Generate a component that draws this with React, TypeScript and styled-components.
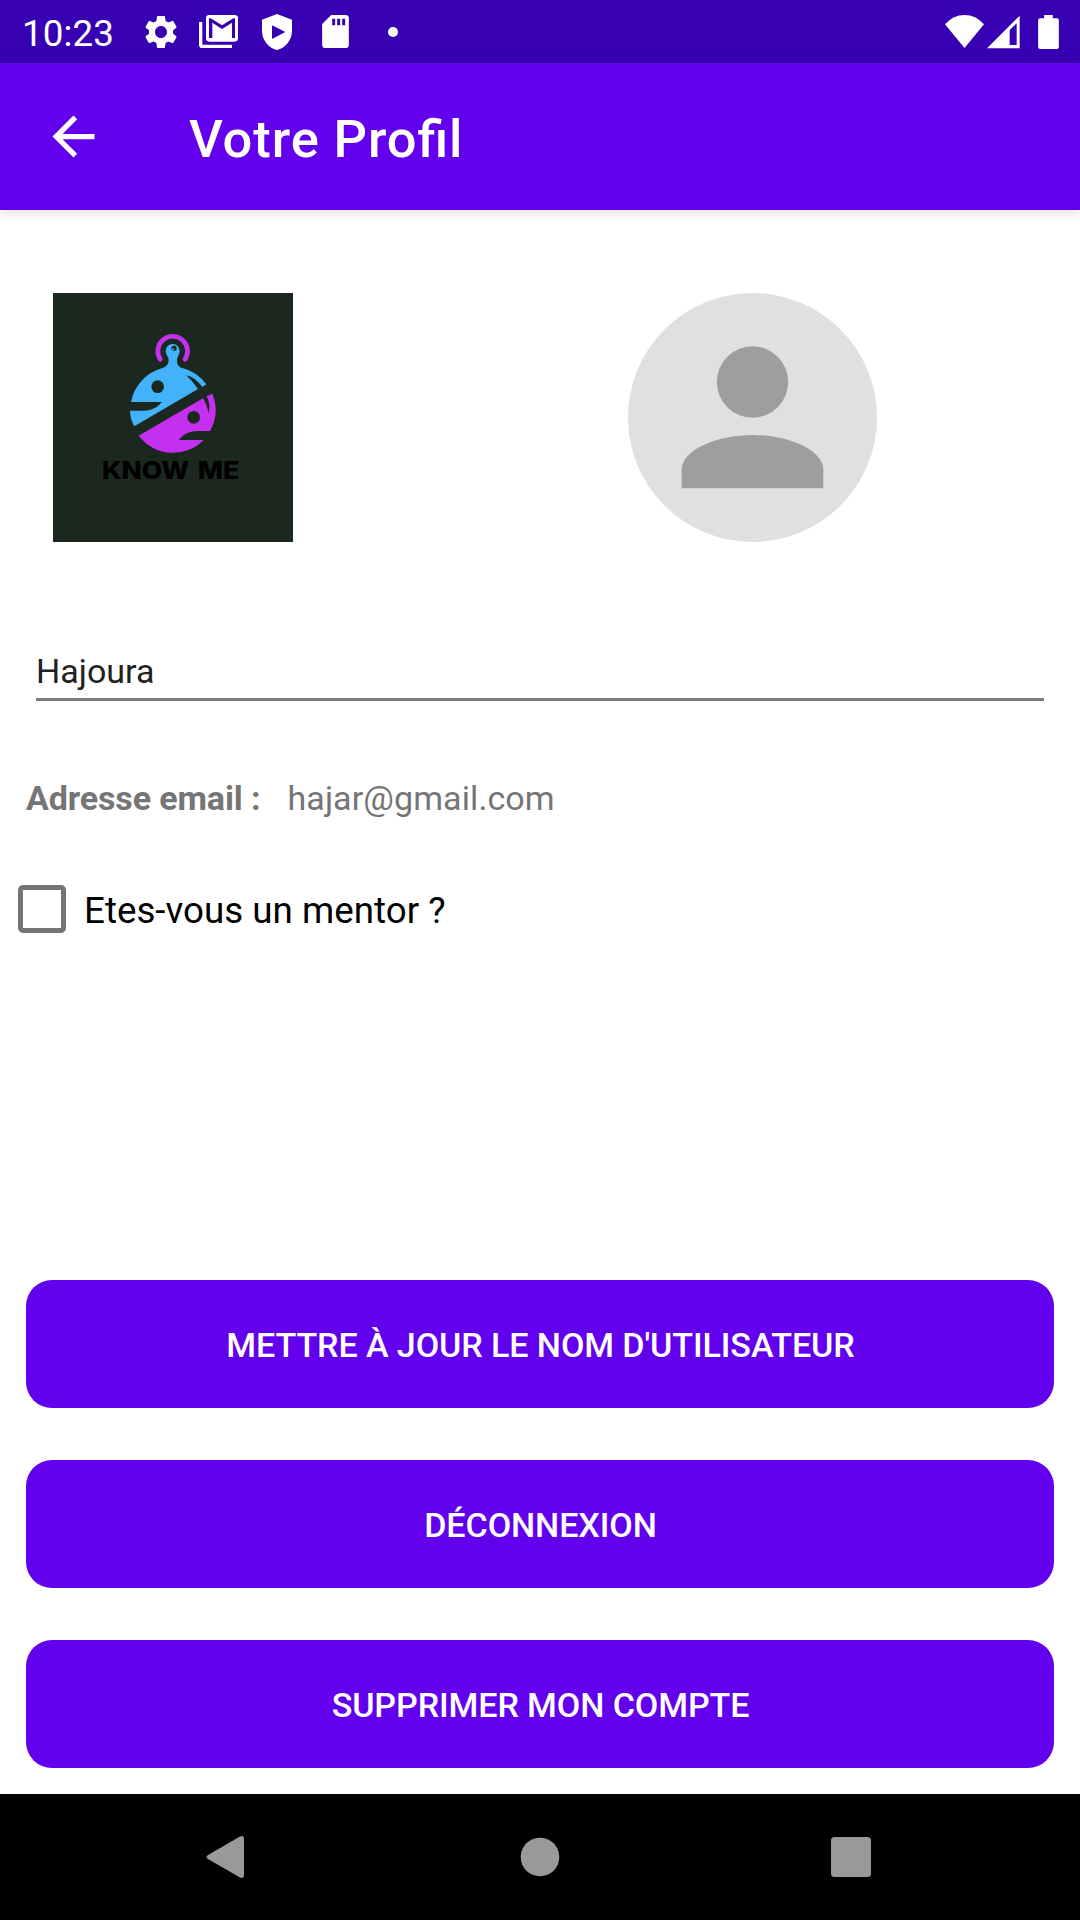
import React, { useState } from "react";
import styled, { createGlobalStyle } from "styled-components";

const GlobalStyle = createGlobalStyle`
  * { box-sizing: border-box; }
  body { margin: 0; background: #fff; font-family: Roboto, "Noto Sans", sans-serif; }
  button, input { font-family: inherit; border: 0; padding: 0; margin: 0; background: none; outline: none; }
  svg { display: block; flex: none; }
`;

const Screen = styled.div`
  width: 1080px;
  height: 1920px;
  display: flex;
  flex-direction: column;
  overflow: hidden;
  background: #fff;
`;

const StatusBar = styled.div`
  height: 63px;
  flex: none;
  display: flex;
  align-items: center;
  justify-content: space-between;
  padding: 0 21px 0 22px;
  background: #3700b3;
  color: #fff;
`;

const StatusGroup = styled.div`
  display: flex;
  align-items: center;
`;

const Clock = styled.span`
  width: 119px;
  font-size: 36.75px;
  line-height: 43px;
  letter-spacing: 0.1px;
  padding-top: 3px;
`;

const Glyph = styled.svg<{ $w: number; $h: number; $ml?: number }>`
  width: ${(p) => p.$w}px;
  height: ${(p) => p.$h}px;
  margin-left: ${(p) => p.$ml ?? 0}px;
  fill: currentColor;
`;

const AppBar = styled.header`
  height: 147px;
  flex: none;
  display: flex;
  align-items: center;
  padding-left: 42px;
  background: #6200ee;
  color: #fff;
  box-shadow: 0 2px 13px rgba(0, 0, 0, 0.14);
`;

const BackButton = styled.button`
  width: 63px;
  height: 63px;
  color: #fff;
`;

const Title = styled.h1`
  margin: 4px 0 0 84px;
  font-size: 52.5px;
  font-weight: 500;
  line-height: 62px;
  letter-spacing: 0.9px;
  font-feature-settings: "liga" 1;
`;

const Content = styled.main`
  flex: 1;
  display: flex;
  flex-direction: column;
  padding-top: 83px;
`;

const Pictures = styled.div`
  display: flex;
  gap: 335px;
  padding-left: 53px;
  height: 249px;
`;

const NameField = styled.input`
  margin: 101px 36px 0;
  height: 58px;
  font-size: 34px;
  color: #212121;
  border-bottom: 3px solid #7b7b7b;
`;

const EmailRow = styled.div`
  display: flex;
  gap: 27px;
  margin-top: 77px;
  padding-left: 26px;
  font-size: 34px;
  line-height: 40px;
  color: #757575;
`;

const Label = styled.span`
  font-weight: 700;
  letter-spacing: -0.12px;
`;

const Email = styled.span`
  letter-spacing: 0.1px;
`;

const MentorRow = styled.label`
  display: flex;
  align-items: center;
  gap: 18px;
  margin-top: 67px;
  padding-left: 18px;
  height: 48px;
  font-size: 36.75px;
  line-height: 44px;
  color: #000;
`;

const MentorText = styled.span`
  padding-top: 3px;
`;

const CheckBox = styled.input`
  appearance: none;
  width: 48px;
  height: 48px;
  border: 5px solid #757575;
  border-radius: 5px;
  &:checked { background: #6200ee; border-color: #6200ee; }
`;

const Actions = styled.div`
  display: flex;
  flex-direction: column;
  gap: 52px;
  margin-top: auto;
  padding: 0 26px 26px;
`;

const Action = styled.button`
  height: 128px;
  padding: 2px 0 0 1px;
  border-radius: 26px;
  background: #6200ee;
  color: #fff;
  font-size: 34.1px;
  font-weight: 500;
  line-height: 40px;
  letter-spacing: -0.1px;
  text-transform: uppercase;
`;

const NavBar = styled.nav`
  height: 126px;
  flex: none;
  display: flex;
  align-items: center;
  padding-left: 206px;
  background: #000;
  color: #999;
`;

const Logo = () => (
  <svg width="240" height="249" viewBox="39 39 720 747" aria-label="Know Me">
    <rect x="39" y="39" width="720" height="747" fill="#1b281f" />
    <path d="M361 238A44.500 44.500 0 1 1 435 238" fill="none" stroke="#c52ff0" strokeWidth="14" strokeLinecap="round" />
    <path
      fill="#42b3fb"
      d="M283 439L474 327C462 310 450 297 439 286C460 291 476 306 487 321L499 313A130 130 0 0 0 424 263C414 260 411 250 411 240C411 230 419 224 419 213A21 21 0 1 0 377 213C377 224 386 230 386 240C386 252 380 260 368 264A130 130 0 0 0 273 366L366 366C350 384 333 392 312 392L270 392C270 408 275 424 283 439Z"
    />
    <path
      fill="#c52ff0"
      d="M296 467L489 355C497 368 503 383 505 400C511 384 508 365 500 349L517 341A129 129 0 0 1 510 453L472 453C448 453 428 464 417 480L491 480A129 129 0 0 1 296 467Z"
    />
    <g fill="#1b281f">
      <circle cx="353" cy="320" r="19" />
      <circle cx="461" cy="412" r="19" />
      <circle cx="402" cy="205" r="8" />
    </g>
    <circle cx="399" cy="208" r="3" fill="#42b3fb" />
    <g fill="#000" fontFamily="Inter, sans-serif" fontWeight="800" fontSize="72">
      <text x="186" y="598" textLength="262" lengthAdjust="spacingAndGlyphs">
        KNOW
      </text>
      <text x="473" y="598" textLength="125" lengthAdjust="spacingAndGlyphs">
        ME
      </text>
    </g>
  </svg>
);

const Avatar = () => (
  <svg width="249" height="249" viewBox="54 39 747 747">
    <circle cx="427.5" cy="412.5" r="373.5" fill="#e0e0e0" />
    <g fill="#9e9e9e">
      <circle cx="427.5" cy="306" r="107" />
      <path d="M215 625V569C215 510 320 465 427.5 465C535 465 640 510 640 569V625Z" />
    </g>
  </svg>
);

const ACTIONS = ["Mettre à jour le nom d'utilisateur", "Déconnexion", "Supprimer mon compte"];

export default function App() {
  const [name, setName] = useState("Hajoura");
  const [mentor, setMentor] = useState(false);

  return (
    <>
      <GlobalStyle />
      <Screen>
        <StatusBar>
          <StatusGroup>
            <Clock>10:23</Clock>
            <Glyph $w={40} $h={40} viewBox="0 0 24 24">
              <path d="M19.14 12.94c.04-.3.06-.61.06-.94 0-.32-.02-.64-.07-.94l2.03-1.58c.18-.14.23-.41.12-.61l-1.92-3.32c-.12-.22-.37-.29-.59-.22l-2.39.96c-.5-.38-1.03-.7-1.62-.94l-.36-2.54c-.04-.24-.24-.41-.48-.41h-3.84c-.24 0-.43.17-.47.41l-.36 2.54c-.59.24-1.13.57-1.62.94l-2.39-.96c-.22-.08-.47 0-.59.22L2.74 8.87c-.12.21-.08.47.12.61l2.03 1.58c-.05.3-.09.63-.09.94s.02.64.07.94l-2.03 1.58c-.18.14-.23.41-.12.61l1.92 3.32c.12.22.37.29.59.22l2.39-.96c.5.38 1.03.7 1.62.94l.36 2.54c.05.24.24.41.48.41h3.84c.24 0 .44-.17.47-.41l.36-2.54c.59-.24 1.13-.56 1.62-.94l2.39.96c.22.08.47 0 .59-.22l1.92-3.32c.12-.22.07-.47-.12-.61l-2.01-1.58zM12 15.6c-1.98 0-3.6-1.62-3.6-3.6s1.62-3.6 3.6-3.6 3.6 1.62 3.6 3.6-1.62 3.6-3.6 3.6z" />
            </Glyph>
            <Glyph $w={39} $h={33} $ml={18} viewBox="597 45 117 99">
              <path d="M597 66H607V134H696V144H607Q597 144 597 134Z" />
              <path
                fillRule="evenodd"
                d="M628 45H704Q714 45 714 55V115Q714 125 704 125H628Q618 125 618 115V55Q618 45 628 45ZM627 55V114H637V68L666 87L696 68V114H705V55H700L666 76L632 55Z"
              />
            </Glyph>
            <Glyph $w={30} $h={36} $ml={24} viewBox="786 41 90 108">
              <path
                fillRule="evenodd"
                d="M831 41L876 58V91C876 119 857 142 831 149C805 142 786 119 786 91V58ZM816 75V116L856 95Z"
              />
            </Glyph>
            <Glyph $w={27} $h={33} $ml={30} viewBox="965 45 80 99">
              <path
                fillRule="evenodd"
                d="M992 45H1035Q1045 45 1045 55V134Q1045 144 1035 144H975Q965 144 965 134V72ZM995 56V76H1004V56ZM1010 56V76H1019V56ZM1025 56V76H1034V56Z"
              />
            </Glyph>
            <Glyph $w={10} $h={10} $ml={39} viewBox="0 0 10 10">
              <circle cx="5" cy="5" r="5" />
            </Glyph>
          </StatusGroup>
          <StatusGroup>
            <Glyph $w={39} $h={34} viewBox="135 41 117 102">
              <path d="M135 69Q160 41 193.500 41T252 69L193.500 140Z" />
            </Glyph>
            <Glyph $w={33} $h={34} $ml={3} viewBox="262 41 99 102">
              <path fillRule="evenodd" d="M262 141L360 43V141ZM330 86V131H351V66Z" />
            </Glyph>
            <Glyph $w={21} $h={34} $ml={18} viewBox="416 42 62 102">
              <path d="M434 42H460V52H472Q478 52 478 58V138Q478 144 472 144H422Q416 144 416 138V58Q416 52 422 52H434Z" />
            </Glyph>
          </StatusGroup>
        </StatusBar>

        <AppBar>
          <BackButton aria-label="Retour">
            <Glyph $w={63} $h={63} viewBox="0 0 24 24">
              <path d="M20 11H7.830l5.590-5.590L12 4l-8 8 8 8 1.410-1.410L7.830 13H20v-2z" />
            </Glyph>
          </BackButton>
          <Title>Votre Profil</Title>
        </AppBar>

        <Content>
          <Pictures>
            <Logo />
            <Avatar />
          </Pictures>
          <NameField value={name} onChange={(e) => setName(e.target.value)} />
          <EmailRow>
            <Label>Adresse email :</Label>
            <Email>hajar@gmail.com</Email>
          </EmailRow>
          <MentorRow>
            <CheckBox type="checkbox" checked={mentor} onChange={() => setMentor(!mentor)} />
            <MentorText>Etes-vous un mentor ?</MentorText>
          </MentorRow>
          <Actions>
            {ACTIONS.map((text) => (
              <Action key={text}>{text}</Action>
            ))}
          </Actions>
        </Content>

        <NavBar>
          <Glyph $w={38} $h={42} viewBox="0 0 38 42">
            <path d="M2 19L34 .5Q38-1 38 3V39Q38 43 34 41.500L2 23Q-1 21 2 19Z" />
          </Glyph>
          <Glyph $w={40} $h={40} $ml={276} viewBox="0 0 40 40">
            <circle cx="20" cy="20" r="19.300" />
          </Glyph>
          <Glyph $w={40} $h={40} $ml={271} viewBox="0 0 40 40">
            <rect width="40" height="40" rx="3.500" />
          </Glyph>
        </NavBar>
      </Screen>
    </>
  );
}
